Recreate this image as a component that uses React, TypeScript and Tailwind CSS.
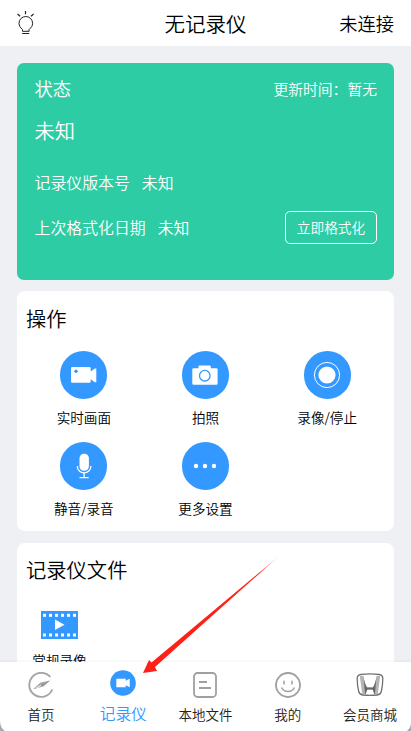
import type { ReactNode } from 'react';

interface Action {
  label: string;
  icon: ReactNode;
}

function BulbIcon() {
  return (
    <svg width="18" height="24" viewBox="0 0 18 24" fill="none" stroke="#222" strokeWidth="1">
      <path d="M8.500 0v3.300M0.500 3l2.600 2.200M16.600 3L14 5.200" strokeWidth="1.200" />
      <path d="M5.500 20.300v-1.800C3.200 16.400 2 14.800 2 12.300a6.700 6.700 0 0 1 13.600 0c0 2.500-1.200 4.100-3.500 6.200v1.800z" />
      <path d="M5.200 22.500h7" />
    </svg>
  );
}

function VideoIcon() {
  return (
    <svg width="26" height="18" viewBox="0 0 26 18">
      <path fill="#fff" d="M1.200 1h17.300a1.200 1.200 0 0 1 1.200 1.200v3.300l4.100-3h1.500v13.800h-1.500l-4.100-3v2.200a1.200 1.200 0 0 1-1.200 1.200H1.200A1.200 1.200 0 0 1 0 15.500V2.200A1.200 1.200 0 0 1 1.200 1z" />
      <circle cx="5" cy="5.300" r="1.700" fill="#3398ff" />
    </svg>
  );
}

function CameraIcon() {
  return (
    <svg width="26" height="20" viewBox="0 0 26 20">
      <path fill="#fff" d="M1.500 3.300H6.500V1.800A1.200 1.200 0 0 1 7.700.5h9.900a1.200 1.200 0 0 1 1.200 1.300v1.500h5.600a1.200 1.200 0 0 1 1.200 1.200v14a1.200 1.200 0 0 1-1.200 1.200H1.500A1.200 1.200 0 0 1 .3 18.500v-14a1.200 1.200 0 0 1 1.200-1.200z" />
      <circle cx="12.800" cy="10.700" r="5.300" fill="none" stroke="#3398ff" strokeWidth="1.300" />
    </svg>
  );
}

function RecordIcon() {
  return (
    <svg width="28" height="28" viewBox="0 0 28 28">
      <circle cx="14" cy="14" r="12.600" fill="none" stroke="#fff" strokeWidth="1" />
      <circle cx="14" cy="14" r="8.600" fill="#fff" />
    </svg>
  );
}

function MicIcon() {
  return (
    <svg width="16" height="26" viewBox="0 0 16 26" fill="none" stroke="#fff">
      <rect x="3.500" y="0.800" width="9.400" height="17" rx="4.500" fill="#fff" stroke="none" />
      <path d="M1.400 13v.8a6.700 6 0 0 0 13.400 0V13" strokeWidth="1.300" />
      <path d="M8.100 20v4.500M3.500 24.700h9.200" strokeWidth="1.300" />
    </svg>
  );
}

function MoreIcon() {
  return (
    <svg width="24" height="6" viewBox="0 0 24 6" fill="#fff">
      <circle cx="3" cy="3" r="2.200" />
      <circle cx="12" cy="3" r="2.200" />
      <circle cx="21" cy="3" r="2.200" />
    </svg>
  );
}

function FilmIcon() {
  const holes = [2, 8, 14, 20, 26, 32];

  return (
    <svg width="37" height="28" viewBox="0 0 37 28">
      <path fill="#3398ff" d="M0 0h37v28H0z" />
      {holes.map((x) => (
        <g key={x} fill="#fff">
          <rect x={x} y="2.800" width="3" height="3" />
          <rect x={x} y="22.500" width="3" height="3" />
        </g>
      ))}
      <path fill="#fff" d="M14 8.500l9.500 5.300-9.500 5.300z" />
    </svg>
  );
}

function CompassIcon() {
  return (
    <svg width="26" height="26" viewBox="0 0 26 26">
      <path d="M22.300 5A12 12 0 1 0 24.300 17.500" fill="none" stroke="#a5a5a5" strokeWidth="1.900" />
      <path d="M5 17.300L12.500 10.500L22.300 8.500L15.500 14.500z" fill="#a8a8a8" />
      <path d="M5 17.300L22.300 8.500L15 13z" fill="#777" />
      <path d="M8 16.200l5-2.800" stroke="#fff" strokeWidth="1" />
    </svg>
  );
}

function RecorderIcon() {
  return (
    <svg width="26" height="26" viewBox="0 0 26 26">
      <circle cx="13" cy="13" r="12.800" fill="#3398ff" />
      <path fill="#fff" d="M6.300 8.800h9.400v2l4-2v8.500l-4-2v2H6.300z" />
    </svg>
  );
}

function FileIcon() {
  return (
    <svg width="26" height="26" viewBox="0 0 26 26" fill="none" stroke="#a0a0a0" strokeWidth="1.800">
      <rect x="2" y="1" width="22" height="24" rx="3.500" />
      <path d="M7 10h8M7 16h12" />
    </svg>
  );
}

function SmileIcon() {
  return (
    <svg width="26" height="26" viewBox="0 0 26 26" fill="none" stroke="#a0a0a0" strokeWidth="1.800">
      <circle cx="13" cy="13" r="12" />
      <path d="M9 8.800v3.800M17 8.800v3.800M6.500 15.500c2.500 5.300 10.500 5.300 13 0" strokeWidth="1.500" />
    </svg>
  );
}

function MallIcon() {
  return (
    <svg width="28" height="24" viewBox="0 0 28 24">
      <path d="M5 1.500C11 .7 17 .7 23 1.500c2.300.3 3.800 1.600 3.800 4 0 4.500-.5 9-1.500 13-.5 2-1.800 3.300-4 3.500-4.800.5-9.800.5-14.600 0-2.200-.2-3.500-1.500-4-3.500-1-4-1.500-8.500-1.500-13 0-2.400 1.500-3.700 3.800-4z" fill="#fff" stroke="#707070" strokeWidth="1.300" />
      <path d="M3.800 3h3.700c.5 5 1.800 8.800 3.500 11.500h6c1.700-2.700 3-6.500 3.500-11.500h3.700l-2.400 18h-3.600c-.4-2-1-3.500-1.700-4.500h-5c-.7 1-1.300 2.500-1.700 4.500H6.200z" fill="#b5b5b5" />
      <path d="M7.500 3c.5 5 1.800 8.800 3.500 11.500h6c1.700-2.700 3-6.500 3.500-11.500l-1.600 18h-.7c-.4-2-1-3.500-1.700-4.500h-5c-.7 1-1.300 2.500-1.700 4.500h-.7z" fill="#666" />
    </svg>
  );
}

const actions: Action[] = [
  { label: '实时画面', icon: <VideoIcon /> },
  { label: '拍照', icon: <CameraIcon /> },
  { label: '录像/停止', icon: <RecordIcon /> },
  { label: '静音/录音', icon: <MicIcon /> },
  { label: '更多设置', icon: <MoreIcon /> },
];

const tabs = [
  { label: '首页', icon: <CompassIcon /> },
  { label: '记录仪', icon: <RecorderIcon />, active: true },
  { label: '本地文件', icon: <FileIcon /> },
  { label: '我的', icon: <SmileIcon /> },
  { label: '会员商城', icon: <MallIcon /> },
];

export default function App() {
  return (
    <div className="relative flex h-[731px] w-[411px] flex-col overflow-hidden bg-[#eff0f3] font-['Noto_Sans_CJK_SC',sans-serif] font-[350] text-black">
      {/* Header */}
      <header className="grid h-[46px] shrink-0 grid-cols-3 items-center bg-white px-[17px]">
        <BulbIcon />
        <h1 className="text-center text-[20.5px] leading-[44px] font-[350]">无记录仪</h1>
        <span className="text-right text-[18.3px] leading-[44px]">未连接</span>
      </header>

      <main className="flex min-h-0 flex-1 flex-col gap-3 overflow-hidden px-[17px] pt-[17px]">
        {/* Device status */}
        <section className="h-[216.500px] shrink-0 rounded-[7px] bg-[#2ecca4] pr-[17px] pl-[17.500px] text-white">
          <div className="flex h-[52px] items-center justify-between">
            <span className="text-[18.3px]">状态</span>
            <span className="text-[14.8px]">更新时间：暂无</span>
          </div>
          <div className="h-8 text-[20.3px] leading-[30px]">未知</div>
          <div className="mt-[20px] flex h-8 items-center gap-3 text-[15.9px]">
            <span>记录仪版本号</span>
            <span>未知</span>
          </div>
          <div className="mt-[12px] flex h-[33px] items-center gap-3 text-[15.9px]">
            <span>上次格式化日期</span>
            <span>未知</span>
            <button className="ml-auto flex h-[33px] w-[92px] items-start justify-center rounded-[5px] border-[1.5px] border-white text-[13.7px] leading-[30px]">
              立即格式化
            </button>
          </div>
        </section>

        {/* Actions */}
        <section className="-mt-[0.500px] h-[240px] shrink-0 rounded-[8px] bg-white px-[6px]">
          <h2 className="ml-[3px] h-[60px] text-[20.3px] leading-[55px] font-[350]">操作</h2>
          <div className="grid grid-cols-3">
            {actions.map((action) => (
              <div key={action.label} className="flex h-[91px] flex-col items-center">
                <div className="flex h-12 w-[47px] items-center justify-center rounded-full bg-[#3398ff]">{action.icon}</div>
                <span className="mt-[7px] text-[13.6px] leading-[22px]">{action.label}</span>
              </div>
            ))}
          </div>
        </section>

        {/* Recorder files */}
        <section className="h-[240px] shrink-0 rounded-[8px] bg-white px-[9px]">
          <h2 className="h-[68px] text-[20.3px] leading-[53px] font-[350]">记录仪文件</h2>
          <div className="flex w-[67px] flex-col items-center">
            <FilmIcon />
            <span className="mt-[10px] text-[13.6px] leading-[22px] whitespace-nowrap">常规录像</span>
          </div>
        </section>
      </main>

      {/* Bottom tabs */}
      <nav className="z-10 grid h-[69px] shrink-0 grid-cols-5 bg-white shadow-[0_-1px_2px_rgba(0,0,0,0.05)]">
        {tabs.map((tab) => (
          <div key={tab.label} className={tab.active ? 'flex flex-col items-center pt-2 text-[#3398ff]' : 'flex flex-col items-center pt-[10px] text-[#222]'}>
            <div className="flex h-[26px] items-center">{tab.icon}</div>
            <span className={tab.active ? 'mt-[7px] text-[15.7px] leading-[22px]' : 'mt-[5px] text-[13.5px] leading-[22px]'}>{tab.label}</span>
          </div>
        ))}
      </nav>

      {/* Pointer over the recorder tab */}
      <svg className="pointer-events-none absolute inset-0 z-20" width="411" height="731">
        <defs>
          <linearGradient id="arrow" gradientUnits="userSpaceOnUse" x1="143" y1="673" x2="279" y2="556">
            <stop offset="0.850" stopColor="#ff2117" />
            <stop offset="1" stopColor="#ff2117" stopOpacity=".25" />
          </linearGradient>
        </defs>
        <path fill="url(#arrow)" d="M279 556L151.500 662.500L149 660L143 673L157 671L155 667z" />
      </svg>
      <svg className="pointer-events-none absolute bottom-0 left-0 z-20" width="411" height="12" fill="#aaa">
        <path d="M0 1Q0 9 5 12H0zM411 3Q411 9 407 12h4z" />
      </svg>
    </div>
  );
}
